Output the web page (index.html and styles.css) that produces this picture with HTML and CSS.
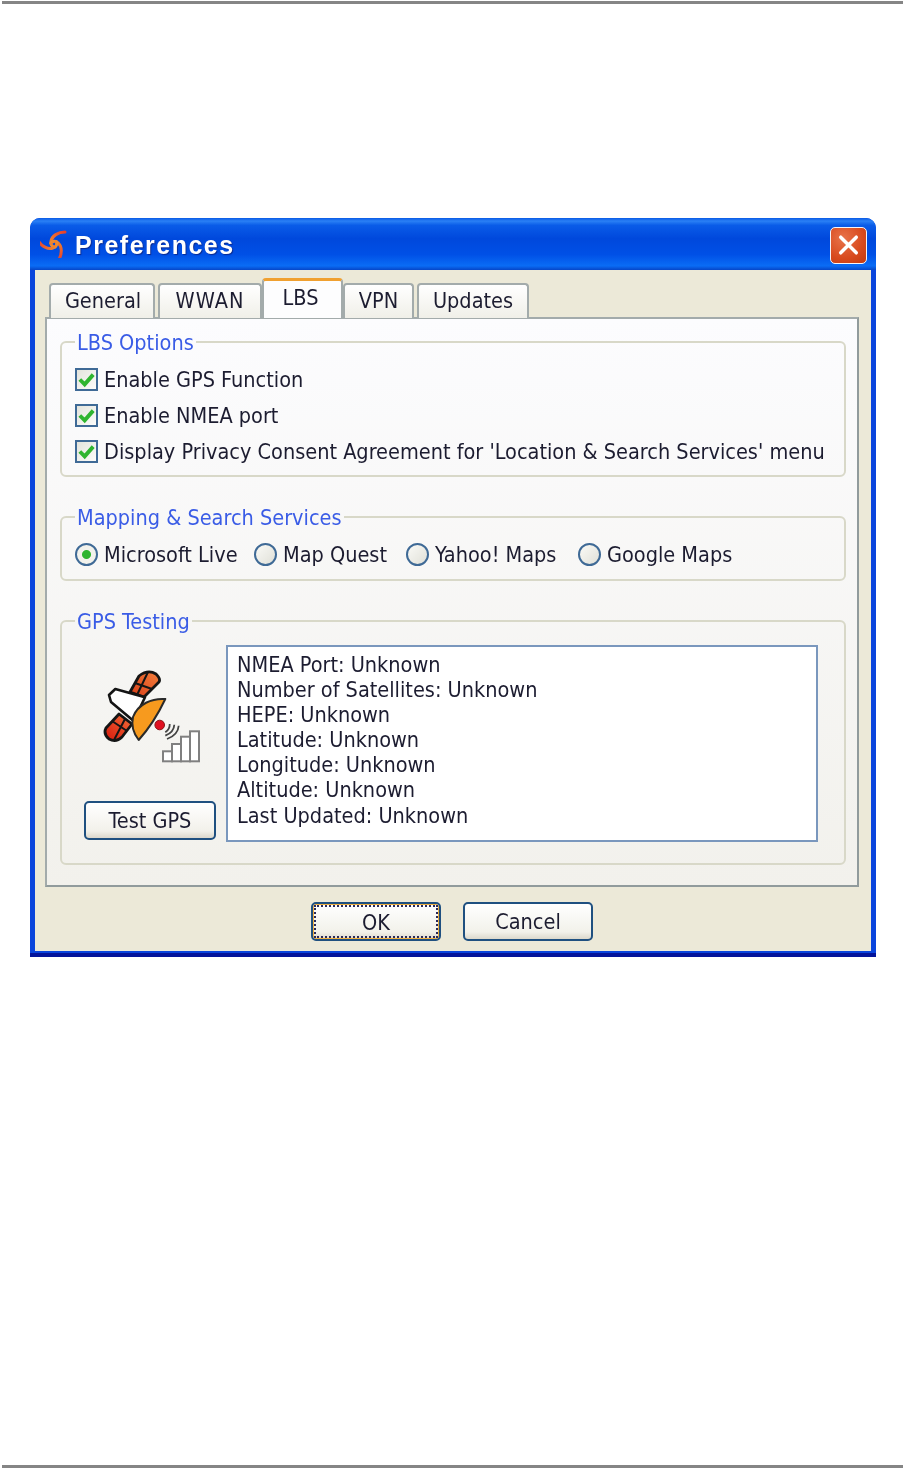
FILE: index.html
```html
<!DOCTYPE html>
<html lang="en">
<head>
  <meta charset="UTF-8">
  <title>Preferences</title>
  <link rel="stylesheet" href="styles.css">
</head>
<body>
  <div class="rule rule-top"></div>

  <div class="window">
    <div class="titlebar">
      <svg class="app-logo" viewBox="0 0 28 28" width="28" height="28">
        <defs>
          <linearGradient id="arm" x1="1" y1="0" x2="0" y2="1">
            <stop offset="0" stop-color="#e8402a"/>
            <stop offset="1" stop-color="#f09030"/>
          </linearGradient>
        </defs>
        <g fill="none" stroke="url(#arm)" stroke-width="3" stroke-linecap="round">
          <path d="M25 2 C18 2 12 6 11 11 C10 14 12 17 15 17"/>
          <path d="M25 2 C18 2 12 6 11 11 C10 14 12 17 15 17" transform="rotate(120 14 14)"/>
          <path d="M25 2 C18 2 12 6 11 11 C10 14 12 17 15 17" transform="rotate(240 14 14)"/>
        </g>
      </svg>
      <span class="title-text">Preferences</span>
      <button class="close-btn">
        <svg viewBox="0 0 36 36" width="36" height="36">
          <path d="M10 10 L26 26 M26 10 L10 26" stroke="#fff" stroke-width="3.6" stroke-linecap="round"/>
        </svg>
      </button>
    </div>

    <div class="window-body">
      <div class="tabs">
        <div class="tab tab-general">General</div>
        <div class="tab tab-wwan">WWAN</div>
        <div class="tab tab-lbs active">LBS</div>
        <div class="tab tab-vpn">VPN</div>
        <div class="tab tab-updates">Updates</div>
      </div>

      <div class="panel">
        <fieldset class="group group-options">
          <legend>LBS Options</legend>
          <label class="option">
            <span class="check"><svg viewBox="0 0 14 14" width="17" height="17"><path d="M1.5 7 L5.5 11 L12.5 3" fill="none" stroke="#2fb52f" stroke-width="3.2"/></svg></span>
            Enable GPS Function
          </label>
          <label class="option">
            <span class="check"><svg viewBox="0 0 14 14" width="17" height="17"><path d="M1.5 7 L5.5 11 L12.5 3" fill="none" stroke="#2fb52f" stroke-width="3.2"/></svg></span>
            Enable NMEA port
          </label>
          <label class="option">
            <span class="check"><svg viewBox="0 0 14 14" width="17" height="17"><path d="M1.5 7 L5.5 11 L12.5 3" fill="none" stroke="#2fb52f" stroke-width="3.2"/></svg></span>
            Display Privacy Consent Agreement for 'Location &amp; Search Services' menu
          </label>
        </fieldset>

        <fieldset class="group group-mapping">
          <legend>Mapping &amp; Search Services</legend>
          <div class="radio-row">
            <label class="option"><span class="radio selected"></span>Microsoft Live</label>
            <label class="option"><span class="radio"></span>Map Quest</label>
            <label class="option"><span class="radio"></span>Yahoo! Maps</label>
            <label class="option"><span class="radio"></span>Google Maps</label>
          </div>
        </fieldset>

        <fieldset class="group group-testing">
          <legend>GPS Testing</legend>
          <div class="testing-row">
            <div class="testing-side">
              <svg class="sat-icon" viewBox="0 0 100 100" width="100" height="100">
                <defs>
                  <linearGradient id="wing-top" x1="1" y1="0" x2="0" y2="1">
                    <stop offset="0" stop-color="#f4803c"/>
                    <stop offset="1" stop-color="#d83c18"/>
                  </linearGradient>
                  <linearGradient id="wing-low" x1="1" y1="0" x2="0" y2="1">
                    <stop offset="0" stop-color="#f0703a"/>
                    <stop offset="1" stop-color="#d8180c"/>
                  </linearGradient>
                </defs>
                <g stroke="#151515" stroke-width="2.8" stroke-linejoin="round">
                  <path d="M28 23 L37 7 Q46 0 54 5 Q59 10 57 13 L42 28 Z" fill="url(#wing-top)"/>
                  <path d="M46 3 L35 26 M33 14 L50 20" fill="none" stroke-width="2"/>
                  <path d="M17 45 L30 55 L20 68 Q14 74 7 70 Q1 65 4 59 Z" fill="url(#wing-low)"/>
                  <path d="M23 50 L12 71 M10 52 L25 62" fill="none" stroke-width="2"/>
                </g>
                <path d="M7 26 L13.3 20 L43 28.3 L31.7 52 L9 33 Z" fill="#fff" stroke="#151515" stroke-width="2.6" stroke-linejoin="round"/>
                <path d="M63.3 30 C50 29 36 35 31 48 C29 57 32 65 36.7 71 Q52 54 63.3 30 Z" fill="#f79a1e" stroke="#2a2a2a" stroke-width="2" stroke-linejoin="round"/>
                <circle cx="57.7" cy="56" r="4.8" fill="#e01020" stroke="#8a1515"/>
                <g fill="none" stroke="#444" stroke-width="1.8">
                  <path d="M67.7 55 Q68 60 63.3 63.3"/>
                  <path d="M72.3 55.7 Q72 63 63.3 66.7"/>
                  <path d="M76.7 56.7 Q76 66 65 70"/>
                </g>
                <g fill="#fff" stroke="#808080" stroke-width="2">
                  <rect x="61" y="82.3" width="9" height="10"/>
                  <rect x="70" y="75" width="9" height="17.3"/>
                  <rect x="79" y="67.7" width="9" height="24.6"/>
                  <rect x="88" y="62.3" width="9" height="30"/>
                </g>
              </svg>
              <button class="btn btn-test">Test GPS</button>
            </div>
            <div class="status-box">
              <div>NMEA Port: Unknown</div>
              <div>Number of Satellites: Unknown</div>
              <div>HEPE: Unknown</div>
              <div>Latitude: Unknown</div>
              <div>Longitude: Unknown</div>
              <div>Altitude: Unknown</div>
              <div>Last Updated: Unknown</div>
            </div>
          </div>
        </fieldset>
      </div>

      <div class="actions">
        <button class="btn btn-default"><span>OK</span></button>
        <button class="btn">Cancel</button>
      </div>
    </div>
  </div>

  <div class="rule rule-bottom"></div>
</body>
</html>
```

FILE: styles.css
```css
* {
  box-sizing: border-box;
}

body {
  margin: 0;
  height: 100vh;
  overflow: hidden;
  display: flex;
  flex-direction: column;
  background-color: #fff;
  font-family: "DejaVu Sans Condensed", "DejaVu Sans", sans-serif;
  font-size: 21.5px;
  color: #1c1c30;
}

.rule {
  height: 3px;
  margin: 0 2px;
  background-color: #858585;
}

.rule-top {
  margin-top: 1px;
}

.rule-bottom {
  margin-top: auto;
}

.window {
  width: 846px;
  height: 739px;
  margin: 214px 0 0 30px;
  display: flex;
  flex-direction: column;
  background: linear-gradient(#0a45dc 0 calc(100% - 4px), #04149a 0);
  border-radius: 10px 10px 0 0;
  overflow: hidden;
  filter: blur(0.6px);
}

.titlebar {
  height: 52px;
  flex-shrink: 0;
  display: flex;
  align-items: center;
  padding: 2px 9px 0 10px;
  background: linear-gradient(#0a5ae6 0%, #2a80f5 6%, #0a5ce8 14%, #0048dc 40%, #0050e6 70%, #0a6cf5 92%, #0646c8 100%);
}

.app-logo {
  flex-shrink: 0;
  margin-top: -2px;
}

.title-text {
  margin-left: 7px;
  font-family: "Liberation Sans", sans-serif;
  font-size: 25px;
  font-weight: bold;
  letter-spacing: 1.5px;
  color: #fff;
  text-shadow: 1px 1px 1px #0a2a90;
}

.close-btn {
  margin-left: auto;
  width: 37px;
  height: 37px;
  padding: 0;
  display: flex;
  align-items: center;
  justify-content: center;
  border: 1.5px solid #f4f4f8;
  border-radius: 5px;
  background: radial-gradient(circle at 35% 30%, #e8734a, #d84a1e 60%, #c23a10);
}

.window-body {
  flex: 1;
  margin: 0 5px 6px;
  padding: 0 12px 0 10px;
  background-color: #ece9d8;
  display: flex;
  flex-direction: column;
}

.tabs {
  height: 48px;
  flex-shrink: 0;
  display: flex;
  align-items: flex-end;
  padding-left: 4px;
  margin-bottom: -1px;
  position: relative;
  z-index: 1;
}

.tab {
  height: 35px;
  display: flex;
  align-items: center;
  justify-content: center;
  padding-bottom: 2px;
  margin-right: 3px;
  background: linear-gradient(#fff, #f0efe8);
  border: 2px solid #a3abab;
  border-bottom: none;
  border-radius: 4px 4px 0 0;
}

.tab-general { width: 106px; padding-left: 2px; }
.tab-wwan { width: 104px; margin-right: 0; letter-spacing: 1px; }
.tab-vpn { width: 71px; }
.tab-updates { width: 112px; }

.tab.active {
  width: 81px;
  height: 40px;
  margin-right: 0;
  padding: 0 4px 5px 0;
  background: #fdfdfe;
  border-top: 3px solid #f0a030;
}

.panel {
  height: 570px;
  flex-shrink: 0;
  padding: 1px 11px 0 13px;
  background: linear-gradient(#fcfcfe, #f2f1ec);
  border: 2px solid #a3abab;
  border-right-color: #919b9c;
  border-bottom-color: #919b9c;
}

.group {
  margin: 0;
  min-width: 0;
  padding: 0 13px;
  border: 2px solid #d8d8c8;
  border-radius: 6px;
}

.group legend {
  padding: 2px 2px 0;
  line-height: 24px;
  color: #3a5ce6;
}

.group-options {
  height: 148px;
  padding-top: 6px;
  margin-top: 9px;
}

.group-mapping {
  height: 77px;
  margin-top: 27px;
  padding-top: 6px;
}

.group-testing {
  height: 257px;
  margin-top: 27px;
}

.option {
  display: flex;
  align-items: center;
  height: 36px;
  white-space: nowrap;
}

.check {
  width: 23px;
  height: 23px;
  flex-shrink: 0;
  display: flex;
  align-items: center;
  justify-content: center;
  margin-right: 6px;
  background: linear-gradient(135deg, #e4e4dc, #fcfcfa);
  border: 2px solid #3f6a96;
}

.radio-row {
  display: flex;
}

.radio-row .option:nth-child(1) { width: 179px; }
.radio-row .option:nth-child(2) { width: 152px; }
.radio-row .option:nth-child(3) { width: 172px; }

.radio {
  width: 23px;
  height: 23px;
  flex-shrink: 0;
  margin-right: 6px;
  border: 2px solid #3f6a96;
  border-radius: 50%;
  background: linear-gradient(135deg, #fafaf6, #e0e0d8);
}

.radio.selected {
  background: radial-gradient(circle, #2fb52f 0 4px, #f2f2ec 5px);
}

.testing-row {
  display: flex;
  align-items: flex-start;
  padding: 11px 13px 0 9px;
}

.testing-side {
  width: 142px;
  flex-shrink: 0;
  display: flex;
  flex-direction: column;
}

.sat-icon {
  margin: 24px 0 0 18px;
  flex-shrink: 0;
}

.btn {
  width: 130px;
  height: 39px;
  padding: 0;
  font-family: inherit;
  font-size: 21.5px;
  color: #1c1c30;
  background: linear-gradient(#fff, #f2f1ea 80%, #dcd8cc);
  border: 2px solid #1f5080;
  border-radius: 5px;
}

.btn-test {
  width: 132px;
  margin-top: 32px;
}

.status-box {
  flex: 1;
  height: 197px;
  padding: 5px 9px;
  background-color: #fff;
  border: 2px solid #7a97bd;
  line-height: 25.1px;
}

.actions {
  display: flex;
  gap: 22px;
  padding-top: 15px;
  padding-left: 266px;
}

.btn-default {
  padding: 1px;
  box-shadow: inset 0 0 0 1px #f0b040;
}

.btn-default span {
  display: block;
  height: 100%;
  line-height: 31px;
  border: 2px dotted #2a2a5a;
}
```
